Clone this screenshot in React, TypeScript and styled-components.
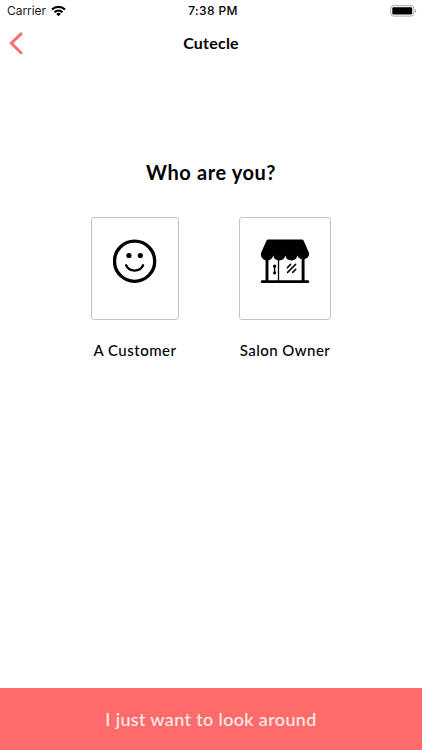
import React from "react";
import styled, { createGlobalStyle } from "styled-components";

const GlobalStyle = createGlobalStyle`
  * { box-sizing: border-box; }
  body { margin: 0; background: #fff; color: #000; font-family: Lato, "Noto Sans", sans-serif; }
  svg { display: block; }
`;

const Screen = styled.div`
  display: flex;
  flex-direction: column;
  height: 750px;
  width: 100%;
  background: #fff;
  overflow: hidden;
`;

const StatusBar = styled.div`
  display: grid;
  grid-template-columns: 1fr auto 1fr;
  align-items: center;
  height: 22px;
  padding: 0 5px 0 7px;
  font-family: Inter, sans-serif;
  font-size: 12px;
  line-height: 22px;
`;

const Carrier = styled.div`
  display: flex;
  align-items: center;
  gap: 5px;
  letter-spacing: -0.05px;
  color: #1a1a1a;
`;

const Time = styled.div`
  font-weight: 500;
  font-size: 12px;
  letter-spacing: 0.35px;
  padding-left: 2px;
`;

const BatterySlot = styled.div`
  display: flex;
  justify-content: flex-end;
`;

const Header = styled.header`
  display: grid;
  grid-template-columns: 1fr auto 1fr;
  align-items: center;
  height: 42px;
  padding: 0 9px;
`;

const BackButton = styled.button`
  justify-self: start;
  padding: 0;
  border: 0;
  background: none;
`;

const Title = styled.h1`
  margin: 0;
  font-size: 16px;
  line-height: 20px;
  font-weight: 700;
  letter-spacing: 0.22px;
`;

const Main = styled.main`
  flex: 1;
  display: flex;
  flex-direction: column;
  align-items: center;
  padding-top: 94px;
`;

const Question = styled.h2`
  margin: 0;
  font-size: 20px;
  line-height: 28px;
  font-weight: 700;
  letter-spacing: 0.6px;
`;

const Options = styled.div`
  display: flex;
  gap: 60px;
  margin-top: 31px;
`;

const Option = styled.div`
  display: flex;
  flex-direction: column;
  align-items: center;
`;

const Card = styled.div<{ $width: number }>`
  display: flex;
  justify-content: center;
  width: ${(p) => p.$width}px;
  height: 103px;
  padding-top: 20px;
  border: 1px solid #c4c4c4;
  border-radius: 3px;
`;

const Label = styled.div<{ $spacing: number }>`
  margin-top: 20px;
  font-size: 15px;
  line-height: 20px;
  font-weight: 500;
  white-space: nowrap;
  letter-spacing: ${(p) => p.$spacing}px;
`;

const LookAround = styled.button`
  height: 62px;
  padding: 0;
  border: 0;
  background: #ff6b6b;
  color: #ffecec;
  font-family: inherit;
  font-size: 18px;
  font-weight: 500;
  letter-spacing: 0.35px;
`;

const WifiIcon = () => (
  <svg width="15" height="12" viewBox="0 0 15 12">
    <g fill="none" stroke="#000" strokeWidth="2.1">
      <path d="M1 4.5a9.4 9.4 0 0 1 13 0" />
      <path d="M3.5 7.2a5.8 5.8 0 0 1 8 0" />
    </g>
    <path d="M5.2 8.9a3.4 3.4 0 0 1 4.6 0L7.5 11.2z" />
  </svg>
);

const BatteryIcon = () => (
  <svg width="27" height="12" viewBox="0 0 27 12">
    <rect x=".7" y=".7" width="23.1" height="10.4" rx="2.8" fill="#fff" stroke="#aaa" />
    <rect x="2.3" y="2.3" width="19.9" height="7.2" rx="1.2" />
    <path d="M25 4v4c1.7-.7 1.7-3.3 0-4z" fill="#aaa" />
  </svg>
);

const BackIcon = () => (
  <svg width="15" height="22" viewBox="0 0 15 22">
    <path d="M12 1.9 2.3 11.3 12 20.7" fill="none" stroke="#f96c6f" strokeWidth="2.9" strokeLinecap="round" />
  </svg>
);

const SmileIcon = () => (
  <svg width="44" height="46" viewBox="0 0 44 46">
    <g fill="none" stroke="#000" strokeLinecap="round">
      <circle cx="21.6" cy="23.2" r="20.1" strokeWidth="3.3" />
      <path d="M13.1 27.3c3.2 7 13.8 7 17 0" strokeWidth="2.3" />
    </g>
    <circle cx="15.9" cy="17.5" r="2.6" />
    <circle cx="27.3" cy="17.5" r="2.6" />
  </svg>
);

const ShopIcon = () => (
  <svg width="50" height="46" viewBox="0 0 50 46">
    <g transform="translate(.3 .6)">
      <path d="M8 1H41.5Q42.9 1 43.5 2.3L48.8 14.5A6.1 6.1 0 0 1 37.1 17 6.2 6.2 0 0 1 25 17 6.2 6.2 0 0 1 12.9 17 6.1 6.1 0 0 1 .7 14.5L6 2.3Q6.6 1 8 1Z" />
      <g fill="none" stroke="#000" strokeLinecap="round">
        <path d="M6.7 19v24M42.8 19v24" strokeWidth="2.9" />
        <path d="M18.2 20v23" strokeWidth="1.3" />
        <path d="M1.9 43.1h45.6" strokeWidth="2.8" />
        <path d="M14.3 27.8v6.4" strokeWidth="1.4" />
        <path d="m27.1 29 3.2-3.2M27.3 33.8l8-8M32.4 33.8l3.1-3.1" strokeWidth="1.5" />
      </g>
      <circle cx="14.3" cy="27.6" r="1.6" />
      <circle cx="14.3" cy="34.2" r="1.6" />
    </g>
  </svg>
);

export default function App() {
  return (
    <>
      <GlobalStyle />
      <Screen>
        <StatusBar>
          <Carrier>
            Carrier
            <WifiIcon />
          </Carrier>
          <Time>7:38 PM</Time>
          <BatterySlot>
            <BatteryIcon />
          </BatterySlot>
        </StatusBar>
        <Header>
          <BackButton aria-label="Back">
            <BackIcon />
          </BackButton>
          <Title>Cutecle</Title>
        </Header>
        <Main>
          <Question>Who are you?</Question>
          <Options>
            <Option>
              <Card $width={88}>
                <SmileIcon />
              </Card>
              <Label $spacing={0.5}>A Customer</Label>
            </Option>
            <Option>
              <Card $width={92}>
                <ShopIcon />
              </Card>
              <Label $spacing={0.45}>Salon Owner</Label>
            </Option>
          </Options>
        </Main>
        <LookAround>I just want to look around</LookAround>
      </Screen>
    </>
  );
}
